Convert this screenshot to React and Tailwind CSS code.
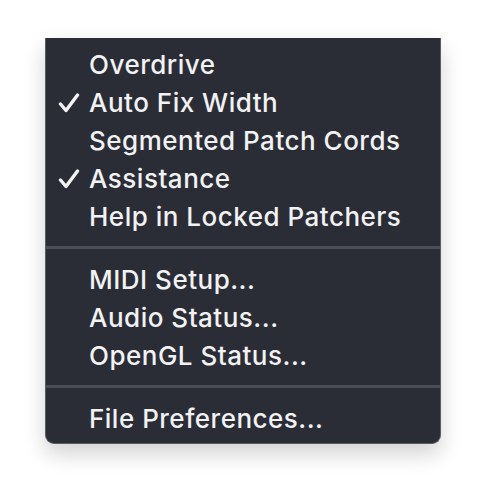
const groups = [
  [
    { label: "Overdrive" },
    { label: "Auto Fix Width", checked: true },
    { label: "Segmented Patch Cords" },
    { label: "Assistance", checked: true },
    { label: "Help in Locked Patchers" },
  ],
  [{ label: "MIDI Setup..." }, { label: "Audio Status..." }, { label: "OpenGL Status..." }],
  [{ label: "File Preferences..." }],
];

function Check() {
  return (
    <svg viewBox="0 0 22 20" className="w-[22px] h-[20px]" fill="none">
      <path d="M2.5 11 L8 17.5 L19.5 2" stroke="#f2f2f3" strokeWidth="3.4" strokeLinecap="round" strokeLinejoin="round" />
    </svg>
  );
}

export default function App() {
  return (
    <div className="w-[486px] h-[498px] bg-white pt-[38px] pl-[45px]" style={{ fontFamily: "Inter, 'Noto Sans', sans-serif" }}>
      <div className="w-[396px] h-[406px] bg-[#2a2d36] border-x border-b border-[#5a5c62] rounded-b-[9px] shadow-[0_10px_22px_rgba(0,0,0,0.18)] flex flex-col pt-[7px]">
        {groups.map((g, gi) => (
          <div key={gi}>
            {gi > 0 && <div className="h-[3px] bg-[#4b4e56] my-[11px]" />}
            {g.map((it) => (
              <div key={it.label} className="h-[38px] flex items-center text-[26px] font-medium tracking-[0.5px] text-[#f2f2f3]">
                <div className="w-[43px] flex justify-end pr-[9px] pt-[1px]">{it.checked && <Check />}</div>
                <span>{it.label}</span>
              </div>
            ))}
          </div>
        ))}
      </div>
    </div>
  );
}
